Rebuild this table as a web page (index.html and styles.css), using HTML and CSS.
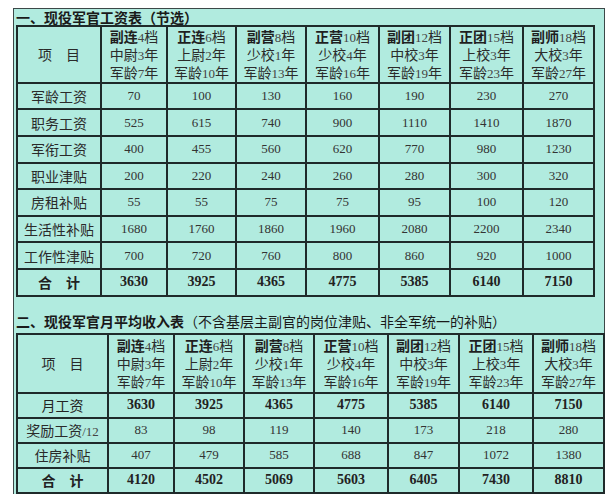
FILE: index.html
```
<!DOCTYPE html>
<html lang="zh-CN">
<head>
<meta charset="utf-8">
<title>现役军官工资表</title>
<link rel="stylesheet" href="styles.css">
</head>
<body>
<div class="frame">
  <div class="title t1-title"><b>一、现役军官工资表（节选）</b></div>
  <table class="pay pay1">
    <colgroup>
      <col style="width:84px"><col style="width:66px"><col style="width:69px"><col style="width:70px">
      <col style="width:73px"><col style="width:71px"><col style="width:73px"><col style="width:71px">
    </colgroup>
    <tr class="head">
      <td class="label">项　目</td>
      <td><b>副连</b><span class="n">4</span>档<br>中尉<span class="n">3</span>年<br>军龄<span class="n">7</span>年</td>
      <td><b>正连</b><span class="n">6</span>档<br>上尉<span class="n">2</span>年<br>军龄<span class="n">10</span>年</td>
      <td><b>副营</b><span class="n">8</span>档<br>少校<span class="n">1</span>年<br>军龄<span class="n">13</span>年</td>
      <td><b>正营</b><span class="n">10</span>档<br>少校<span class="n">4</span>年<br>军龄<span class="n">16</span>年</td>
      <td><b>副团</b><span class="n">12</span>档<br>中校<span class="n">3</span>年<br>军龄<span class="n">19</span>年</td>
      <td><b>正团</b><span class="n">15</span>档<br>上校<span class="n">3</span>年<br>军龄<span class="n">23</span>年</td>
      <td><b>副师</b><span class="n">18</span>档<br>大校<span class="n">3</span>年<br>军龄<span class="n">27</span>年</td>
    </tr>
    <tr><td class="label">军龄工资</td><td>70</td><td>100</td><td>130</td><td>160</td><td>190</td><td>230</td><td>270</td></tr>
    <tr><td class="label">职务工资</td><td>525</td><td>615</td><td>740</td><td>900</td><td>1110</td><td>1410</td><td>1870</td></tr>
    <tr><td class="label">军衔工资</td><td>400</td><td>455</td><td>560</td><td>620</td><td>770</td><td>980</td><td>1230</td></tr>
    <tr><td class="label">职业津贴</td><td>200</td><td>220</td><td>240</td><td>260</td><td>280</td><td>300</td><td>320</td></tr>
    <tr><td class="label">房租补贴</td><td>55</td><td>55</td><td>75</td><td>75</td><td>95</td><td>100</td><td>120</td></tr>
    <tr><td class="label">生活性补贴</td><td>1680</td><td>1760</td><td>1860</td><td>1960</td><td>2080</td><td>2200</td><td>2340</td></tr>
    <tr><td class="label">工作性津贴</td><td>700</td><td>720</td><td>760</td><td>800</td><td>860</td><td>920</td><td>1000</td></tr>
    <tr class="total"><td class="label">合　计</td><td>3630</td><td>3925</td><td>4365</td><td>4775</td><td>5385</td><td>6140</td><td>7150</td></tr>
  </table>

  <div class="title t2-title"><b>二、现役军官月平均收入表</b>（不含基层主副官的岗位津贴、非全军统一的补贴）</div>
  <table class="pay pay2">
    <colgroup>
      <col style="width:91px"><col style="width:66px"><col style="width:70px"><col style="width:70px">
      <col style="width:74px"><col style="width:71px"><col style="width:74px"><col style="width:71px">
    </colgroup>
    <tr class="head">
      <td class="label">项　目</td>
      <td><b>副连</b><span class="n">4</span>档<br>中尉<span class="n">3</span>年<br>军龄<span class="n">7</span>年</td>
      <td><b>正连</b><span class="n">6</span>档<br>上尉<span class="n">2</span>年<br>军龄<span class="n">10</span>年</td>
      <td><b>副营</b><span class="n">8</span>档<br>少校<span class="n">1</span>年<br>军龄<span class="n">13</span>年</td>
      <td><b>正营</b><span class="n">10</span>档<br>少校<span class="n">4</span>年<br>军龄<span class="n">16</span>年</td>
      <td><b>副团</b><span class="n">12</span>档<br>中校<span class="n">3</span>年<br>军龄<span class="n">19</span>年</td>
      <td><b>正团</b><span class="n">15</span>档<br>上校<span class="n">3</span>年<br>军龄<span class="n">23</span>年</td>
      <td><b>副师</b><span class="n">18</span>档<br>大校<span class="n">3</span>年<br>军龄<span class="n">27</span>年</td>
    </tr>
    <tr class="total"><td class="label plain">月工资</td><td>3630</td><td>3925</td><td>4365</td><td>4775</td><td>5385</td><td>6140</td><td>7150</td></tr>
    <tr><td class="label">奖励工资<span class="n">/12</span></td><td>83</td><td>98</td><td>119</td><td>140</td><td>173</td><td>218</td><td>280</td></tr>
    <tr><td class="label">住房补贴</td><td>407</td><td>479</td><td>585</td><td>688</td><td>847</td><td>1072</td><td>1380</td></tr>
    <tr class="total"><td class="label">合　计</td><td>4120</td><td>4502</td><td>5069</td><td>5603</td><td>6405</td><td>7430</td><td>8810</td></tr>
  </table>
</div>
</body>
</html>
```

FILE: styles.css
```
html, body {
  margin: 0;
  padding: 0;
  background: #ffffff;
}

body {
  font-family: "Liberation Serif", "Noto Sans CJK SC", sans-serif;
  color: #2a2a2a;
}

.frame {
  box-sizing: border-box;
  width: 592px;
  margin: 8px 0 0 13px;
  padding: 0 1px 0 2px;
  background: #b1ebdf;
  border: 1px solid #3c4848;
  border-bottom: none;
}

.title {
  font-family: "Noto Sans CJK SC", sans-serif;
  font-size: 14px;
  line-height: 17px;
  height: 16px;
  color: #1a1a1a;
  white-space: nowrap;
  font-weight: normal;
}

.title b {
  font-weight: bold;
}

.t2-title {
  margin-top: 14px;
  height: 22px;
  line-height: 20px;
}

.pay {
  border-collapse: collapse;
  table-layout: fixed;
  background: #b1ebdf;
}

.pay1 { width: 577px; }
.pay2 { width: 587px; }

.pay td {
  border: 2px solid #1f2a2a;
  padding: 0;
  text-align: center;
  vertical-align: middle;
  font-size: 13px;
  line-height: 16px;
  height: 24.65px;
  color: #333;
  white-space: nowrap;
}

.pay2 td { height: 23px; }

.pay .head td {
  font-family: "Noto Sans CJK SC", sans-serif;
  font-size: 14px;
  line-height: 18.2px;
  height: 54px;
  color: #2b2b2b;
}

.pay2 .head td { height: 57px; }

.pay .head td b {
  font-weight: bold;
  color: #1f1f1f;
}

.n {
  font-family: "Liberation Serif", serif;
  font-size: 13px;
  line-height: 0;
  color: #444;
}

.pay td.label {
  font-family: "Noto Sans CJK SC", sans-serif;
  font-size: 14px;
  color: #2a2a2a;
}

.pay .total td {
  font-weight: bold;
  font-size: 14px;
  color: #222;
}

.pay .total td.label {
  font-weight: bold;
}

.pay .total td.plain {
  font-weight: normal;
}
```
